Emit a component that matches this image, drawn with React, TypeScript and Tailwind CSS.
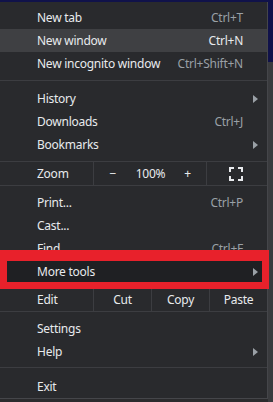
import React from 'react';

type Item = { label: string; shortcut?: string; sub?: boolean; hover?: boolean };

function Arrow() {
  return (
    <svg width="5" height="8" viewBox="0 0 5 8" className="absolute right-[9px] top-1/2 -translate-y-1/2">
      <path d="M0 0 L5 4 L0 8 Z" fill="#9aa0a6" />
    </svg>
  );
}

function Row({ label, shortcut, sub, hover }: Item) {
  return (
    <div
      className={`relative flex h-[23px] items-center pl-[37px] pr-[24px] ${hover ? 'bg-[#3f4043]' : ''}`}
    >
      <span className="flex-1 text-[#e8eaed]">{label}</span>
      {shortcut && (
        <span className={hover ? 'text-[#e8eaed]' : 'text-[#9aa0a6]'}>{shortcut}</span>
      )}
      {sub && <Arrow />}
    </div>
  );
}

function Sep() {
  return <div className="mt-[5px] mb-[6px] h-px bg-[#3c3d41]" />;
}

function FullscreenIcon() {
  return (
    <svg width="14" height="14" viewBox="0 0 14 14" fill="none" stroke="#e8eaed" strokeWidth="2">
      <path d="M1 5 V1 H5 M9 1 H13 V5 M13 9 V13 H9 M5 13 H1 V9" />
    </svg>
  );
}

export default function App() {
  return (
    <div
      className="flex h-[402px] w-[273px] flex-col overflow-hidden bg-[#2b2b2d] text-[12px] tracking-[-0.25px]"
      style={{ fontFamily: '"Noto Sans", "Open Sans", sans-serif' }}
    >
      <div className="h-[2px] shrink-0 bg-[#10124a]" />
      <div className="flex flex-1">
        {/* Menu */}
        <div className="h-[397px] w-[268px] shrink-0 border-r border-b border-[#45464a] bg-[#292a2d] pt-[4px]">
          <Row label="New tab" shortcut="Ctrl+T" />
          <Row label="New window" shortcut="Ctrl+N" hover />
          <Row label="New incognito window" shortcut="Ctrl+Shift+N" />
          <Sep />
          <Row label="History" sub />
          <Row label="Downloads" shortcut="Ctrl+J" />
          <Row label="Bookmarks" sub />

          {/* Zoom */}
          <div className="mt-[5px] mb-[5px] flex h-[25px] border-y border-[#3c3d41] text-[#e8eaed]">
            <div className="flex w-[93px] items-center pl-[37px]">Zoom</div>
            <div className="flex w-[113px] items-center border-l border-[#3c3d41]">
              <span className="w-[38px] text-center">−</span>
              <span className="w-[38px] text-center">100%</span>
              <span className="w-[37px] text-center">+</span>
            </div>
            <div className="flex flex-1 items-center justify-end border-l border-[#3c3d41] pr-[24px]">
              <FullscreenIcon />
            </div>
          </div>

          <Row label="Print..." shortcut="Ctrl+P" />
          <Row label="Cast..." />
          <Row label="Find..." shortcut="Ctrl+F" />
          <div className="relative z-10 flex h-[23px] items-center bg-[#1f2023] pl-[37px] text-[#e8eaed]">
            More tools
            <Arrow />
            <div className="pointer-events-none absolute -top-[10px] -bottom-[6px] left-0 -right-[2px] border-x-[7px] border-t-[11px] border-b-[7px] border-[#e8212b]" />
          </div>

          {/* Edit */}
          <div className="mt-[5px] mb-[5px] flex h-[24px] border-y border-[#3c3d41] text-[#e8eaed]">
            <div className="flex w-[93px] items-center pl-[37px]">Edit</div>
            <div className="flex w-[58px] items-center justify-center border-l border-[#3c3d41]">Cut</div>
            <div className="flex w-[58px] items-center justify-center border-l border-[#3c3d41]">Copy</div>
            <div className="flex flex-1 items-center justify-center border-l border-[#3c3d41]">Paste</div>
          </div>

          <Row label="Settings" />
          <Row label="Help" sub />
          <div className="mt-[4px] mb-[7px] h-px bg-[#3c3d41]" />
          <Row label="Exit" />
        </div>
        <div className="flex flex-1 flex-col">
          <div className="h-[60px] bg-[#10124a]" />
          <div className="flex-1 bg-[#3a3b3e]" />
        </div>
      </div>
    </div>
  );
}
